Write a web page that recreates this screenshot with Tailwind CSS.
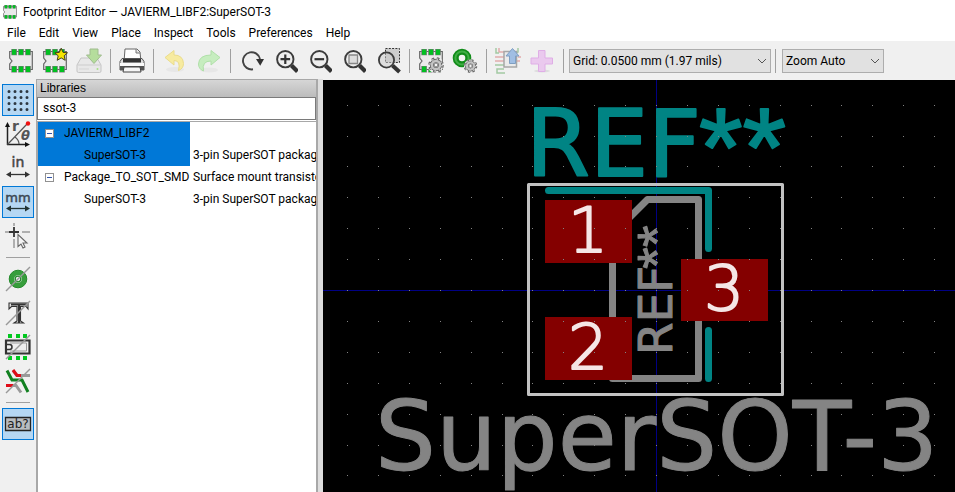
<!DOCTYPE html>
<html lang="en">
<head>
<meta charset="utf-8">
<meta name="viewport" content="width=device-width, initial-scale=1">
<title>Footprint Editor — JAVIERM_LIBF2:SuperSOT-3</title>
<script src="https://cdn.jsdelivr.net/npm/@tailwindcss/browser@4"></script>
</head>
<body class="flex h-screen flex-col overflow-hidden bg-[#f0f0f0] font-[Roboto,'Open_Sans',sans-serif] text-xs text-black">

<svg class="hidden" aria-hidden="true">
  <symbol id="chip" viewBox="0 0 24 24">
    <path d="M.7 2.5H23.3V20.5H.7V15L3 12 .7 9Z" fill="#eaeaea" stroke="#666" stroke-width="1.2"/>
    <path d="M2.3 0h5.6v6.2H2.3zM9.2 0h5.6v6.2H9.2zM16.2 0h5.6v6.2h-5.6zM2.3 17h5.6v6.5H2.3zM9.2 17h5.6v6.5H9.2zM16.2 17h5.6v6.5h-5.6z" fill="#777"/>
    <path d="M3 .5h4.2v5.2H3zM9.9.5h4.2v5.2H9.9zM16.9.5h4.2v5.2h-4.2zM3 17.5h4.2V23H3zM9.9 17.5h4.2V23H9.9zM16.9 17.5h4.2V23h-4.2z" fill="#00c020"/>
  </symbol>
  <symbol id="gear" viewBox="0 0 16 16">
    <circle cx="8" cy="8" r="6.3" fill="none" stroke="#666" stroke-width="3" stroke-dasharray="2.5 2.45"/>
    <circle cx="8" cy="8" r="4.2" fill="none" stroke="#666" stroke-width="4"/>
    <circle cx="8" cy="8" r="6" fill="none" stroke="#c4c4c4" stroke-width="1.8" stroke-dasharray="1.4 3.31"/>
    <circle cx="8" cy="8" r="4.1" fill="none" stroke="#c4c4c4" stroke-width="2.5"/>
    <circle cx="8" cy="8" r="1.9" fill="#f4f4f4" stroke="#666" stroke-width=".8"/>
  </symbol>
  <symbol id="lens" viewBox="0 0 24 24">
    <path d="M17.500 16.500l6 6" stroke="#333" stroke-width="4.2"/>
    <circle cx="11.300" cy="10.2" r="8.2" fill="#eee" stroke="#3c3c3c" stroke-width="1.9"/>
  </symbol>
</svg>

<header class="bg-white">
  <div class="flex h-6 items-center gap-1.5 pl-0.75">
    <svg class="h-3.5 w-3.5"><use href="#chip"/></svg>
    <h1>Footprint Editor — JAVIERM_LIBF2:SuperSOT-3</h1>
  </div>
  <nav class="flex h-[17px] items-center gap-[13px] pl-[7px]" aria-label="Main menu">
    <a href="#">File</a><a href="#">Edit</a><a href="#">View</a><a href="#">Place</a><a href="#">Inspect</a><a href="#">Tools</a><a href="#">Preferences</a><a href="#">Help</a>
  </nav>
</header>

<div class="flex h-[38px] shrink-0 items-center pt-0.5 pl-1" role="toolbar" aria-label="Editor tools">
  <button class="flex h-8 w-[34px] items-center justify-center" aria-label="New footprint"><svg class="h-6 w-6"><use href="#chip"/></svg></button>
  <button class="flex h-8 w-[34px] items-center justify-center" aria-label="New footprint with wizard">
    <svg class="h-6 w-6 overflow-visible" viewBox="0 0 24 24"><use href="#chip" width="24" height="24"/><path d="M18.2-.8l1.9 4.2 4.4.4-3.3 3 1 4.5-4-2.4-4 2.4 1-4.5-3.3-3 4.4-.4z" fill="#f5e400" stroke="#40401a"/></svg>
  </button>
  <button class="flex h-8 w-[34px] items-center justify-center opacity-50" aria-label="Save" disabled>
    <svg class="h-6 w-6 overflow-visible" viewBox="0 0 24 24"><path d="M0 16L4 9h16l4 7v6q0 1.5-1.500 1.500h-21Q0 23.500 0 22z" fill="#e2e2e2" stroke="#9b9b9b"/><path d="M.5 16h23" stroke="#aaa"/><circle cx="20.500" cy="20" r="1" fill="#60d020"/><path d="M2 20h10" stroke="#bbb"/><path d="M13 0h8v6h3.500L17 14.500 9.500 6H13z" fill="#7ccb4b" stroke="#528a30"/></svg>
  </button>
  <span class="mx-1 h-6 w-px bg-[#a0a0a0]"></span>
  <button class="flex h-8 w-[34px] items-center justify-center" aria-label="Print">
    <svg class="h-6 w-6 overflow-visible" viewBox="0 0 24 24"><path d="M4 13L5 0h12l3 3 1 10z" fill="#fff" stroke="#666"/><path d="M16 0v4h4" fill="#ddd" stroke="#777"/><path d="M2 9.500h20l2 3V21H0v-8.500z" fill="#ddd" stroke="#555"/><path d="M3 10h18v3.500H3z" fill="#333"/><path d="M0 14h24v3H0z" fill="#fafafa"/><path d="M0 17h24v4H0z" fill="#555"/><path d="M4 18h16l1 5H3z" fill="#f5f5f5" stroke="#444"/></svg>
  </button>
  <span class="mx-1 h-6 w-px bg-[#a0a0a0]"></span>
  <button class="flex h-8 w-[34px] items-center justify-center" aria-label="Undo" disabled>
    <svg class="h-6 w-6 overflow-visible" viewBox="0 0 24 24"><ellipse cx="12" cy="20.500" rx="9" ry="2.500" fill="#e7e7e7"/><path d="M2 8.500L11 1.500V6q9 0 9.500 8.500 0 5-5 7 2.500-10-4.500-10V16z" fill="#f7eba0" stroke="#eadc8c"/></svg>
  </button>
  <button class="flex h-8 w-[34px] items-center justify-center" aria-label="Redo" disabled>
    <svg class="h-6 w-6 overflow-visible" viewBox="0 0 24 24"><ellipse cx="12" cy="21" rx="9" ry="2.500" fill="#e7e7e7"/><path d="M23 8.500L14 1.500V6Q2 6 1.500 15q0 5 5 7-2-10 7.500-10V16z" fill="#c6edbf" stroke="#b0e0a9"/></svg>
  </button>
  <span class="mx-1 h-6 w-px bg-[#a0a0a0]"></span>
  <button class="flex h-8 w-[34px] items-center justify-center" aria-label="Refresh">
    <svg class="h-6 w-6 overflow-visible" viewBox="0 0 24 24"><path d="M13 20.300A8.600 8.600 0 1 1 20 10" fill="none" stroke="#444" stroke-width="1.900"/><path d="M16 10h8l-3.800 6.800z" fill="#333"/></svg>
  </button>
  <button class="flex h-8 w-[34px] items-center justify-center" aria-label="Zoom in"><svg class="h-6 w-6 overflow-visible" viewBox="0 0 24 24"><use href="#lens" width="24" height="24"/><path d="M6.500 10.200h9.600M11.300 5.400V15" stroke="#333" stroke-width="2.200"/></svg></button>
  <button class="flex h-8 w-[34px] items-center justify-center" aria-label="Zoom out"><svg class="h-6 w-6 overflow-visible" viewBox="0 0 24 24"><use href="#lens" width="24" height="24"/><path d="M6.500 10.200h9.600" stroke="#333" stroke-width="2.200"/></svg></button>
  <button class="flex h-8 w-[34px] items-center justify-center" aria-label="Zoom to fit"><svg class="h-6 w-6 overflow-visible" viewBox="0 0 24 24"><use href="#lens" width="24" height="24"/><path d="M7 6h8.500v8.500H7z" fill="#ddd" stroke="#888" stroke-width="1.300"/></svg></button>
  <button class="flex h-8 w-[34px] items-center justify-center" aria-label="Zoom to selection">
    <svg class="h-6 w-6 overflow-visible" viewBox="0 0 24 24"><path d="M9.500-.500h14v14h-14z" fill="#ccc" stroke="#333" stroke-dasharray="2 1.300"/><path d="M16.500 16.500l7 6.500" stroke="#333" stroke-width="4"/><circle cx="10.500" cy="11" r="7.600" fill="#ccc" fill-opacity=".5" stroke="#3c3c3c" stroke-width="1.800"/></svg>
  </button>
  <span class="mx-1 h-6 w-px bg-[#a0a0a0]"></span>
  <button class="flex h-8 w-[34px] items-center justify-center" aria-label="Footprint properties"><svg class="h-6 w-6 overflow-visible" viewBox="0 0 24 24"><use href="#chip" width="24" height="24"/><circle cx="16.500" cy="16" r="8" fill="#efefef"/><use href="#gear" x="9" y="8" width="16" height="16"/></svg></button>
  <button class="flex h-8 w-[34px] items-center justify-center" aria-label="Pad settings"><svg class="h-6 w-6 overflow-visible" viewBox="0 0 24 24"><circle cx="9" cy="9" r="6.300" fill="#f4f4f4" stroke="#128c1a" stroke-width="6"/><circle cx="9" cy="9" r="6.600" fill="none" stroke="#40ae45" stroke-width="2"/><circle cx="17.500" cy="17" r="6.500" fill="#efefef"/><use href="#gear" x="10.500" y="10" width="14" height="14"/></svg></button>
  <span class="mx-1 h-6 w-px bg-[#a0a0a0]"></span>
  <button class="flex h-8 w-[34px] items-center justify-center opacity-60" aria-label="Load footprint from board" disabled>
    <svg class="h-6 w-6 overflow-visible" viewBox="0 0 24 24"><path d="M-1 8h9M-1 12h9M3-1v4h5M25 8h-3M21 12h3" fill="none" stroke="#d98080" stroke-width="1.500"/><path d="M-1 16h9M8 20H1v4h8M0-1v5h3M19 4l3-1v-4" fill="none" stroke="#70b070" stroke-width="1.500"/><path d="M8 2.500h12.500V18H8z" fill="#e8e8e8" stroke="#777" stroke-width="1.500"/><path d="M16.500-.500L23 7h-3.500v7.500h-6V7H10z" fill="#6c9edb" stroke="#356aa5"/></svg>
  </button>
  <button class="flex h-8 w-[34px] items-center justify-center" aria-label="Add footprint to board" disabled>
    <svg class="h-6 w-6 overflow-visible" viewBox="0 0 24 24"><ellipse cx="12" cy="22" rx="8" ry="1.500" fill="#ddd"/><path d="M8.500 1.500h6.500v7.500h7.500v6h-7.500v7.500H8.500V15H1V9h7.500z" fill="#eac9ee" stroke="#dfaee6"/></svg>
  </button>
  <span class="mx-1 h-6 w-px bg-[#a0a0a0]"></span>
  <div class="relative ml-px w-[202px]">
    <select class="h-6 w-full appearance-none border border-[#adadad] bg-[#e1e1e1] pl-[3px]" aria-label="Grid size"><option>Grid: 0.0500 mm (1.97 mils)</option></select>
    <svg class="pointer-events-none absolute top-2 right-1 h-2 w-2.5" viewBox="0 0 10 8" fill="none" stroke="#555"><path d="M1 2l4 4 4-4"/></svg>
  </div>
  <span class="mx-1 h-6 w-px bg-[#a0a0a0]"></span>
  <div class="relative ml-0.5 w-[102px]">
    <select class="h-6 w-full appearance-none border border-[#adadad] bg-[#e1e1e1] pl-[3px]" aria-label="Zoom level"><option>Zoom Auto</option></select>
    <svg class="pointer-events-none absolute top-2 right-1 h-2 w-2.5" viewBox="0 0 10 8" fill="none" stroke="#555"><path d="M1 2l4 4 4-4"/></svg>
  </div>
</div>

<div class="flex min-h-0 flex-1">
  <div class="flex w-9 shrink-0 flex-col items-center gap-0.5 pt-[5px]" role="toolbar" aria-label="Display options">
    <button class="flex h-8 w-8 items-center justify-center border border-[#0078d7] bg-[#b5d7f3]" aria-label="Show grid" aria-pressed="true">
      <svg class="h-6 w-6" viewBox="0 0 24 24"><path d="M3 3.500h20M3 9.500h20M3 15.500h20M3 21.500h20" stroke="#2d3740" stroke-width="3" stroke-linecap="round" stroke-dasharray="0 6"/></svg>
    </button>
    <button class="flex h-8 w-8 items-center justify-center" aria-label="Polar coordinates">
      <svg class="h-6 w-6 overflow-visible" viewBox="0 0 24 24"><path d="M1.500 23V4M1 22.500h18" stroke="#222" stroke-width="1.500"/><path d="M-1 5l2.500-5L4 5zM19 20l5 2.500-5 2.500z" fill="#111"/><path d="M1.500 22.500L21 2M9 15q4 3 4 7" fill="none" stroke="#555" stroke-width="1.200"/><circle cx="22" cy="1.500" r="2.200" fill="#f01010"/><text x="6" y="9" class="font-['DejaVu_Sans'] text-[14px] font-bold" fill="#555">r</text><text x="15" y="18" class="font-['DejaVu_Sans'] text-[13px] font-bold italic" fill="#555">θ</text></svg>
    </button>
    <button class="flex h-8 w-8 items-center justify-center" aria-label="Units in inches">
      <svg class="h-6 w-6 overflow-visible" viewBox="0 0 24 24"><text x="12" y="11" text-anchor="middle" class="font-['DejaVu_Sans'] text-[14px]" fill="#444" stroke="#444" stroke-width=".5">in</text><path d="M3 18.500h18" stroke="#333" stroke-width="1.300"/><path d="M5 15.500l-5 3 5 3zM19 15.500l5 3-5 3z" fill="#333"/></svg>
    </button>
    <button class="flex h-8 w-8 items-center justify-center border border-[#0078d7] bg-[#b5d7f3]" aria-label="Units in millimeters" aria-pressed="true">
      <svg class="h-6 w-6 overflow-visible" viewBox="0 0 24 24"><text x="12" y="12" text-anchor="middle" class="font-['DejaVu_Sans'] text-[13px]" fill="#3c4854" stroke="#3c4854" stroke-width=".5">mm</text><path d="M3 18.500h18" stroke="#233" stroke-width="1.300"/><path d="M5 15.500l-5 3 5 3zM19 15.500l5 3-5 3z" fill="#233"/></svg>
    </button>
    <button class="flex h-8 w-8 items-center justify-center" aria-label="Full-window crosshair">
      <svg class="h-6 w-6 overflow-visible" viewBox="0 0 24 24"><path d="M-1 8h4M16 8h8M8-1v3M8 15v9" stroke="#999" stroke-width="1.500"/><path d="M3 8h10M8 3v10" stroke="#333" stroke-width="1.800"/><path d="M12 10.500v12l3-2.500 2 4 2-1-2-4h4z" fill="#f4f4f4" stroke="#666" stroke-width="1.100"/></svg>
    </button>
    <span class="my-[3px] h-px w-6 bg-[#a0a0a0]"></span>
    <button class="flex h-8 w-8 items-center justify-center" aria-label="Sketch pads">
      <svg class="h-6 w-6 overflow-visible" viewBox="0 0 24 24"><circle cx="12" cy="12" r="6.300" fill="#f2f2f2" stroke="#379e3c" stroke-width="5"/><circle cx="12" cy="12" r="8.800" fill="none" stroke="#248a2a"/><circle cx="12" cy="12" r="2.800" fill="none" stroke="#248a2a" stroke-width="1.300"/><path d="M0 24L24 0" stroke="#999" stroke-width="1.500"/></svg>
    </button>
    <button class="flex h-8 w-8 items-center justify-center" aria-label="Sketch text">
      <svg class="h-6 w-6 overflow-visible" viewBox="0 0 24 24"><path d="M3 2h19v6l-2-2.500h-5.500V20l3 2H8l3-2V5.500H5.500L3 8z" fill="#e4e4e4" stroke="#333" stroke-width="1.100"/><path d="M13 3v19M5 3.500h16" stroke="#333" stroke-width="2"/><path d="M0 24L24 0" stroke="#999" stroke-width="1.500"/></svg>
    </button>
    <button class="flex h-8 w-8 items-center justify-center" aria-label="Sketch graphics">
      <svg class="h-6 w-6 overflow-visible" viewBox="0 0 24 24"><path d="M2-1h4v4H2zM10-1h4v4h-4zM17-1h4v4h-4zM2 21h4v4H2zM10 21h4v4h-4zM17 21h4v4h-4z" fill="#00c81e"/><path d="M0 5.500h23.500v13H0z" fill="#eee" stroke="#333" stroke-width="2.200"/><path d="M4 8h16.500v8H4" fill="none" stroke="#999"/><path d="M1 9.500h2.500q2.500 0 2.500 2.500t-2.500 2.500H1" fill="#eee" stroke="#333" stroke-width="1.500"/><path d="M0 24L24 0" stroke="#999" stroke-width="1.500"/></svg>
    </button>
    <button class="flex h-8 w-8 items-center justify-center" aria-label="Sketch tracks">
      <svg class="h-6 w-6 overflow-visible" viewBox="0 0 24 24"><path d="M7 1.500l4 5h13" fill="none" stroke="#999" stroke-width="3"/><path d="M7 1l4 5.500h4" fill="none" stroke="#e00c18" stroke-width="3"/><path d="M0 16.500h10l5 7" fill="none" stroke="#999" stroke-width="3"/><path d="M0 16.500h7" stroke="#e00c18" stroke-width="3"/><path d="M1 1.500l5 9.500h10l6 12" fill="none" stroke="#118020" stroke-width="3"/><path d="M0 24L24 0" stroke="#999" stroke-width="1.500"/></svg>
    </button>
    <span class="my-[3px] h-px w-6 bg-[#a0a0a0]"></span>
    <button class="flex h-8 w-8 items-center justify-center border border-[#0078d7] bg-[#b5d7f3]" aria-label="High-contrast labels" aria-pressed="true">
      <svg class="h-6 w-6 overflow-visible" viewBox="0 0 24 24"><path d="M-.500 5.500h25v13h-25z" fill="#b8bcc0" stroke="#222" stroke-width="1.300"/><text x="12" y="16" text-anchor="middle" class="font-['DejaVu_Sans'] text-[12px]" fill="#222">ab?</text></svg>
    </button>
  </div>

  <aside class="flex w-[282px] shrink-0 flex-col border-t border-r-2 border-l border-[#a8a8a8] bg-white">
    <h2 class="flex h-[17px] shrink-0 items-center bg-linear-to-b from-[#d6d6d6] to-[#bcbcbc] pb-0.5 pl-[3px] font-['Liberation_Sans',sans-serif] text-xs"><label for="filter">Libraries</label></h2>
    <input id="filter" type="text" value="ssot-3" class="h-[23px] w-full shrink-0 border border-[#7a7a7a] bg-white px-[5px] pb-px outline-none">
    <div class="mt-px flex-1 overflow-hidden border-t border-l border-[#a8a8a8]">
      <table class="w-full table-fixed border-collapse" aria-label="Footprint libraries">
        <colgroup><col class="w-[152px]"><col></colgroup>
        <tbody class="whitespace-nowrap">
          <tr class="h-[22px]"><td class="bg-[#0078d7] p-0"><div class="flex items-center gap-2.5 pl-[7px]"><button class="flex h-[9px] w-[9px] items-center justify-center border border-[#919191] bg-white" aria-label="Collapse JAVIERM_LIBF2"><span class="h-px w-[5px] bg-[#3355aa]"></span></button>JAVIERM_LIBF2</div></td><td></td></tr>
          <tr class="h-[22px]"><td class="bg-[#0078d7] p-0 pl-[46px]">SuperSOT-3</td><td class="overflow-hidden p-0 pl-[3px]">3-pin SuperSOT packag</td></tr>
          <tr class="h-[22px]"><td class="p-0"><div class="flex items-center gap-2.5 pl-[7px]"><button class="flex h-[9px] w-[9px] items-center justify-center border border-[#919191] bg-white" aria-label="Collapse Package_TO_SOT_SMD"><span class="h-px w-[5px] bg-[#3355aa]"></span></button>Package_TO_SOT_SMD</div></td><td class="overflow-hidden p-0 pl-[3px]">Surface mount transisto</td></tr>
          <tr class="h-[22px]"><td class="p-0 pl-[46px]">SuperSOT-3</td><td class="overflow-hidden p-0 pl-[3px]">3-pin SuperSOT packag</td></tr>
        </tbody>
      </table>
    </div>
  </aside>
  <div class="w-[5px] shrink-0 bg-[#dedede]"></div>

  <main class="min-w-0 flex-1 bg-[#f0f0f0] pt-px">
    <svg class="block h-full w-full bg-black font-['DejaVu_Sans',sans-serif]" viewBox="323 80 632 412" preserveAspectRatio="xMidYMid slice" role="img" aria-label="SuperSOT-3 footprint">
      <path d="M0 290.500h1300M656.500 0v800" stroke="#000084"/>
      <g fill="none" stroke-linecap="round" stroke-linejoin="round">
        <path d="M612.500 378.500V234.500L647.500 199.500H698.500V378.500z" stroke="#848484" stroke-width="7"/>
        <path d="M548.500 190.500H708.500V248.500M708.500 330.500V378.500" stroke="#008484" stroke-width="7"/>
        <path d="M528.500 184.500H782.500V394.500H528.500z" stroke="#c2c2c2" stroke-width="3"/>
      </g>
      <g fill="#008484" stroke="#008484" stroke-width="2" stroke-linejoin="round">
        <text x="526" y="176" class="text-[92px]">REF<tspan x="699" y="186" class="font-['Liberation_Sans'] text-[112px]">**</tspan></text>
      </g>
      <g fill="#848484" stroke="#848484" stroke-linejoin="round">
        <text transform="translate(672 355) rotate(-90)" class="text-[47px]">REF<tspan x="86" y="4" class="font-['Liberation_Sans'] text-[56px]">**</tspan></text>
        <text x="375" y="470" class="text-[96px]">SuperSOT-3</text>
      </g>
      <path d="M545 200h87v63h-87zM545 317h87v63h-87zM681 259h87v62h-87z" fill="#840000"/>
      <g fill="#f5e6e6" stroke="#f5e6e6" stroke-width="2" stroke-linejoin="round" text-anchor="middle" class="font-['DejaVu_Sans_Light','DejaVu_Sans'] text-[63px] font-extralight">
        <text x="588" y="252">1</text><text x="588" y="369">2</text><text x="724" y="310">3</text>
      </g>
      <g id="grid" fill="#848484"></g>
    </svg>
  </main>
</div>

<script>
  // Grid dots every 30.9 units around the footprint origin, snapped to whole pixels.
  const grid = document.getElementById('grid');
  for (let i = -10; i <= 9; i++) {
    for (let j = -6; j <= 6; j++) {
      const dot = document.createElementNS('http://www.w3.org/2000/svg', 'rect');
      dot.setAttribute('x', Math.round(656 + i * 30.9));
      dot.setAttribute('y', Math.round(290 + j * 30.9));
      dot.setAttribute('width', 1);
      dot.setAttribute('height', 1);
      grid.append(dot);
    }
  }
</script>
</body>
</html>
